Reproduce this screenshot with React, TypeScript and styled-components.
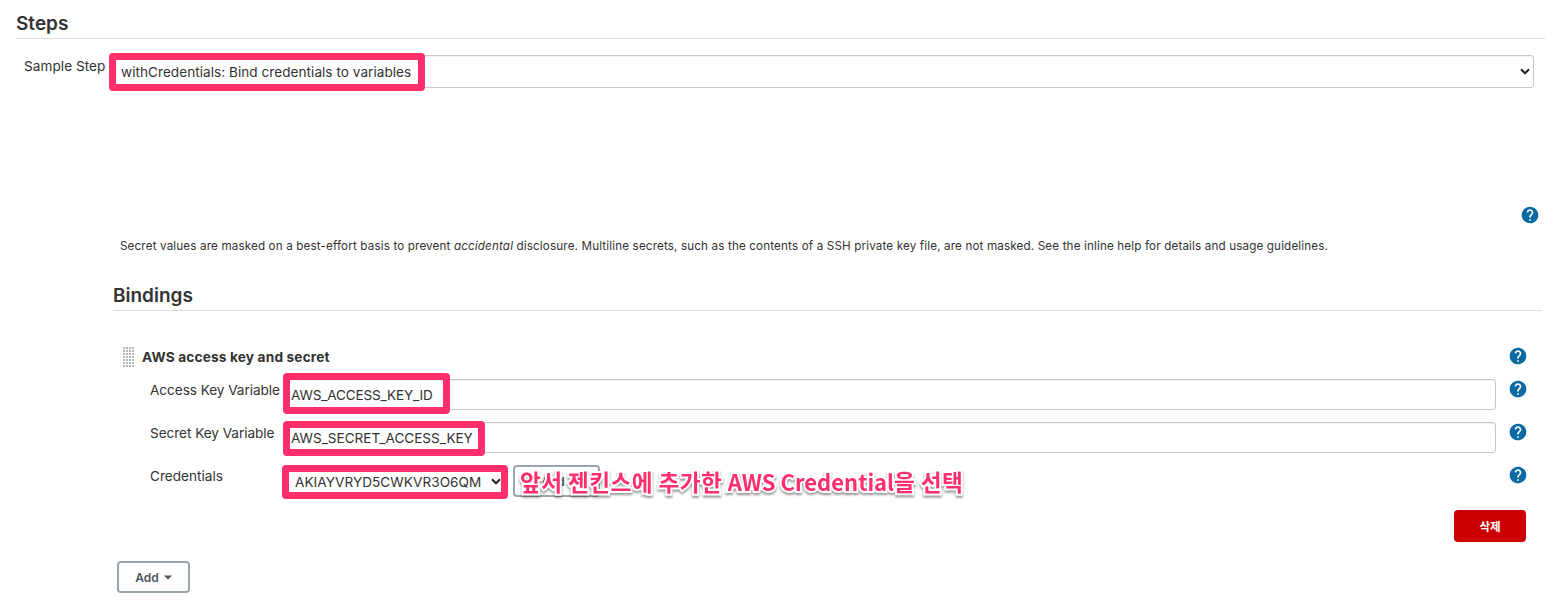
import React from "react";
import styled, { createGlobalStyle } from "styled-components";
import { MdHelp } from "react-icons/md";

const Global = createGlobalStyle`
  * { box-sizing: border-box; }
  body {
    margin: 0;
    background: #fff;
    color: #333;
    font-family: Inter, "Noto Sans CJK KR", sans-serif;
    font-size: 13.6px;
    overflow: hidden;
  }
`;

const PINK = "#ff2f6e";

const Page = styled.main`
  position: relative;
  height: 612px;
  padding: 8px 4px 0 16px;
`;

const Heading = styled.h2`
  margin: 0;
  height: 31px;
  border-bottom: 1px solid #dcdcdc;
  font-size: 19px;
  font-weight: 600;
  line-height: 32px;
`;

const StepRow = styled.div`
  display: flex;
  height: 33px;
  margin: 16px 11px 0 8px;
`;

const Label = styled.label<{ $width: number; $spacing?: string }>`
  flex: 0 0 ${(p) => p.$width}px;
  line-height: 22px;
  white-space: nowrap;
  letter-spacing: ${(p) => p.$spacing ?? "0"};
`;

const Field = styled.div<{ $pad: number; $spacing?: string }>`
  flex: 1;
  display: flex;
  align-items: center;
  justify-content: space-between;
  padding: 0 3px 0 ${(p) => p.$pad}px;
  border: 1px solid #c8c8c8;
  border-radius: 3px;
  box-shadow: inset 0 1px 1px rgba(0, 0, 0, 0.06);
  white-space: nowrap;
  letter-spacing: ${(p) => p.$spacing ?? "0"};
`;

const HelpLine = styled.div`
  display: flex;
  justify-content: flex-end;
  margin-top: 117px;
  padding-right: 5px;
`;

const HelpIcon = styled(MdHelp)`
  display: block;
  flex: none;
  width: 20px;
  height: 20px;
  color: #0b6aa2;
`;

const Note = styled.p`
  margin: 11px 0 0 104px;
  font-size: 11.65px;
  line-height: 20px;
  white-space: nowrap;
  letter-spacing: 0.15px;
`;

const Bindings = styled.section`
  margin: 24px 3px 0 97px;
`;

const BindingHead = styled.div`
  display: flex;
  align-items: flex-start;
  height: 20px;
  margin: 35px 14px 0 10px;
`;

const BindingTitle = styled.strong`
  flex: 1;
  margin-left: 8px;
  font-size: 13.7px;
  font-weight: 650;
  line-height: 22px;
  letter-spacing: 0.15px;
`;

const BindingRow = styled.div`
  display: flex;
  height: 31px;
  margin: 0 14px 12px 37px;
`;

const BindingRows = styled.div`
  padding-top: 13px;
`;

const HelpCell = styled.div`
  margin-left: auto;
  padding-left: 12px;
`;

const Credential = styled.div`
  display: flex;
  align-items: center;
  justify-content: space-between;
  width: 220px;
  height: 31px;
  padding: 2px 3px 0 11px;
  letter-spacing: 0.05px;
`;

const Button = styled.button<{ $width: number }>`
  display: inline-flex;
  align-items: center;
  justify-content: center;
  gap: 5px;
  width: ${(p) => p.$width}px;
  height: 32px;
  padding: 0;
  border: 2px solid #98a6ad;
  border-radius: 4px;
  background: #fff;
  color: #4d545d;
  font: 600 12px Inter, "Noto Sans CJK KR", sans-serif;
`;

const CredentialButton = styled(Button)`
  margin: 0 0 0 9px;
  padding-right: 7px;
`;

const DeleteButton = styled(Button)`
  border: 0;
  background: #cc0003;
  color: #fff;
  font-weight: 700;
  font-size: 11.5px;
`;

const DeleteLine = styled.div`
  display: flex;
  justify-content: flex-end;
  padding-right: 16px;
  margin-top: 14px;
`;

const AddLine = styled.div`
  padding-left: 4px;
  margin-top: 19px;
`;

const Highlight = styled.div<{ $x: number; $y: number; $w: number; $h: number }>`
  position: absolute;
  left: ${(p) => p.$x}px;
  top: ${(p) => p.$y}px;
  width: ${(p) => p.$w}px;
  height: ${(p) => p.$h}px;
  border: 7px solid ${PINK};
  border-radius: 4px;
`;

const Callout = styled.div`
  position: absolute;
  left: 520px;
  top: 465px;
  color: ${PINK};
  font: 700 22.65px/32px "Noto Sans CJK KR", sans-serif;
  letter-spacing: 0.4px;
  white-space: nowrap;
  -webkit-text-stroke: 4px #fff;
  paint-order: stroke fill;
  filter: drop-shadow(0 2px 1px rgba(0, 0, 0, 0.4));
`;

const Latin = styled.span`
  font-size: 22px;
  letter-spacing: 0;
`;

const Chevron = () => (
  <svg width="10" height="8" viewBox="0 0 10 8" fill="none">
    <path d="M1 1.3 5 5.3 9 1.3" stroke="#222" strokeWidth="2" />
  </svg>
);

const Caret = () => (
  <svg width="8" height="5" viewBox="0 0 8 5">
    <path d="M0 .5h8L4 4.5z" fill="#4d545d" />
  </svg>
);

const Grip = () => (
  <svg width="11" height="21" viewBox="0 0 11 21">
    {Array.from({ length: 28 }, (_, i) => (
      <rect key={i} x={(i % 4) * 3} y={1 + Math.floor(i / 4) * 3} width="2" height="2" fill="#b8b8b8" />
    ))}
  </svg>
);

const variables = [
  { label: "Access Key Variable", value: "AWS_ACCESS_KEY_ID", spacing: "-0.17px" },
  { label: "Secret Key Variable", value: "AWS_SECRET_ACCESS_KEY", spacing: "-0.03px" },
];

export default function App() {
  return (
    <>
      <Global />
      <Page>
        <Heading>Steps</Heading>
        <StepRow>
          <Label $width={88} $spacing="0.05px">
            Sample Step
          </Label>
          <Field $pad={8} $spacing="0.03px">
            withCredentials: Bind credentials to variables
            <Chevron />
          </Field>
        </StepRow>
        <HelpLine>
          <HelpIcon />
        </HelpLine>
        <Note>
          Secret values are masked on a best-effort basis to prevent <em>accidental</em> disclosure. Multiline
          secrets, such as the contents of a SSH private key file, are not masked. See the inline help for details
          and usage guidelines.
        </Note>
        <Bindings>
          <Heading>Bindings</Heading>
          <BindingHead>
            <Grip />
            <BindingTitle>AWS access key and secret</BindingTitle>
            <HelpIcon />
          </BindingHead>
          <BindingRows>
            {variables.map((v) => (
              <BindingRow key={v.label}>
                <Label $width={134} $spacing="-0.05px">
                  {v.label}
                </Label>
                <Field $pad={6} $spacing={v.spacing}>
                  {v.value}
                </Field>
                <HelpCell>
                  <HelpIcon />
                </HelpCell>
              </BindingRow>
            ))}
            <BindingRow>
              <Label $width={134}>Credentials</Label>
              <Credential>
                AKIAYVRYD5CWKVR3O6QM
                <Chevron />
              </Credential>
              <CredentialButton $width={87}>Add</CredentialButton>
              <HelpCell>
                <HelpIcon />
              </HelpCell>
            </BindingRow>
          </BindingRows>
          <DeleteLine>
            <DeleteButton $width={72}>삭제</DeleteButton>
          </DeleteLine>
          <AddLine>
            <Button $width={73}>
              Add <Caret />
            </Button>
          </AddLine>
        </Bindings>
        <Highlight $x={109} $y={53} $w={316} $h={38} />
        <Highlight $x={283} $y={373} $w={167} $h={41} />
        <Highlight $x={283} $y={421} $w={202} $h={35} />
        <Highlight $x={282} $y={465} $w={226} $h={34} />
        <Callout>
          앞서 젠킨스에 추가한 <Latin>AWS Credential</Latin>을 선택
        </Callout>
      </Page>
    </>
  );
}
